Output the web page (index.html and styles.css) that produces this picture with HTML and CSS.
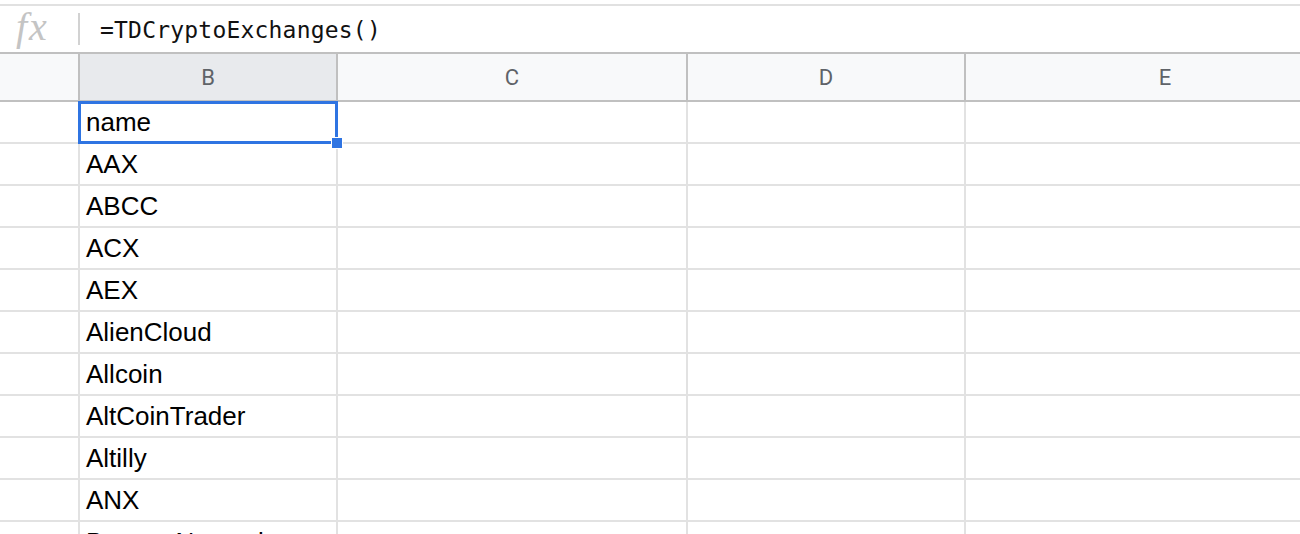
FILE: index.html
```html
<!DOCTYPE html>
<html>
<head>
<meta charset="utf-8">
<link rel="stylesheet" href="styles.css">
</head>
<body>
<div class="sheet">
  <div class="topline"></div>
  <div class="formula-bar">
    <div class="fx">fx</div>
    <div class="fx-sep"></div>
    <div class="formula">=TDCryptoExchanges()</div>
  </div>
  <div class="grid">
    <div class="hcell corner"></div>
    <div class="hcell sel">B</div>
    <div class="hcell">C</div>
    <div class="hcell">D</div>
    <div class="hcell last">E</div>

    <div class="cell lead"></div><div class="cell active">name<span class="selbox"><span class="handle"></span></span></div><div class="cell"></div><div class="cell"></div><div class="cell last"></div>
    <div class="cell lead"></div><div class="cell">AAX</div><div class="cell"></div><div class="cell"></div><div class="cell last"></div>
    <div class="cell lead"></div><div class="cell">ABCC</div><div class="cell"></div><div class="cell"></div><div class="cell last"></div>
    <div class="cell lead"></div><div class="cell">ACX</div><div class="cell"></div><div class="cell"></div><div class="cell last"></div>
    <div class="cell lead"></div><div class="cell">AEX</div><div class="cell"></div><div class="cell"></div><div class="cell last"></div>
    <div class="cell lead"></div><div class="cell">AlienCloud</div><div class="cell"></div><div class="cell"></div><div class="cell last"></div>
    <div class="cell lead"></div><div class="cell">Allcoin</div><div class="cell"></div><div class="cell"></div><div class="cell last"></div>
    <div class="cell lead"></div><div class="cell">AltCoinTrader</div><div class="cell"></div><div class="cell"></div><div class="cell last"></div>
    <div class="cell lead"></div><div class="cell">Altilly</div><div class="cell"></div><div class="cell"></div><div class="cell last"></div>
    <div class="cell lead"></div><div class="cell">ANX</div><div class="cell"></div><div class="cell"></div><div class="cell last"></div>
    <div class="cell lead"></div><div class="cell">Bancor Network</div><div class="cell"></div><div class="cell"></div><div class="cell last"></div>
  </div>
</div>
</body>
</html>
```

FILE: styles.css
```css
html, body {
  margin: 0;
  padding: 0;
  background: #ffffff;
  overflow: hidden;
}

.sheet {
  width: 1300px;
  height: 534px;
  overflow: hidden;
}

.topline {
  height: 4px;
  border-bottom: 2px solid #e1e1e1;
}

.formula-bar {
  height: 46px;
  display: flex;
  align-items: center;
}

.fx {
  width: 78px;
  box-sizing: border-box;
  padding-left: 16px;
  font-family: "Liberation Serif", serif;
  font-style: italic;
  font-size: 40px;
  line-height: 1;
  color: #c4c4c4;
  letter-spacing: 2px;
  margin-top: -4px;
}

.fx-sep {
  width: 2px;
  height: 32px;
  background: #d2d2d2;
}

.formula {
  padding-left: 20px;
  font-family: "DejaVu Sans Mono", "Liberation Mono", monospace;
  font-size: 23px;
  letter-spacing: 0.2px;
  color: #111111;
  line-height: 1;
  margin-top: 2px;
}

.grid {
  display: grid;
  grid-template-columns: 80px 258px 350px 278px 400px;
  width: 1366px;
}

.hcell {
  height: 46px;
  border-top: 2px solid #c0c0c0;
  border-bottom: 2px solid #c0c0c0;
  border-right: 2px solid #c0c0c0;
  background: #f8f9fa;
  display: flex;
  align-items: center;
  justify-content: center;
  font-family: Roboto, "Liberation Sans", sans-serif;
  font-size: 22px;
  color: #5f6368;
}

.hcell.sel {
  background: #e8eaed;
}

.cell {
  position: relative;
  border-right: 2px solid #e2e2e2;
  border-bottom: 2px solid #e2e2e2;
  display: flex;
  align-items: flex-end;
  box-sizing: content-box;
  padding: 0 0 5px 6px;
  height: 35px;
  font-family: "Liberation Sans", Arial, sans-serif;
  font-size: 26px;
  line-height: 30px;
  color: #000000;
  white-space: nowrap;
}

.cell.lead {
  padding-left: 0;
}

.cell.active {
  z-index: 2;
}

.selbox {
  position: absolute;
  left: -2px;
  top: -1px;
  right: -2px;
  bottom: -2px;
  border: 3px solid #2f74e2;
  pointer-events: none;
}

.handle {
  position: absolute;
  right: -8px;
  bottom: -8px;
  width: 10px;
  height: 10px;
  background: #2f74e2;
  border: 1px solid #ffffff;
}
```
